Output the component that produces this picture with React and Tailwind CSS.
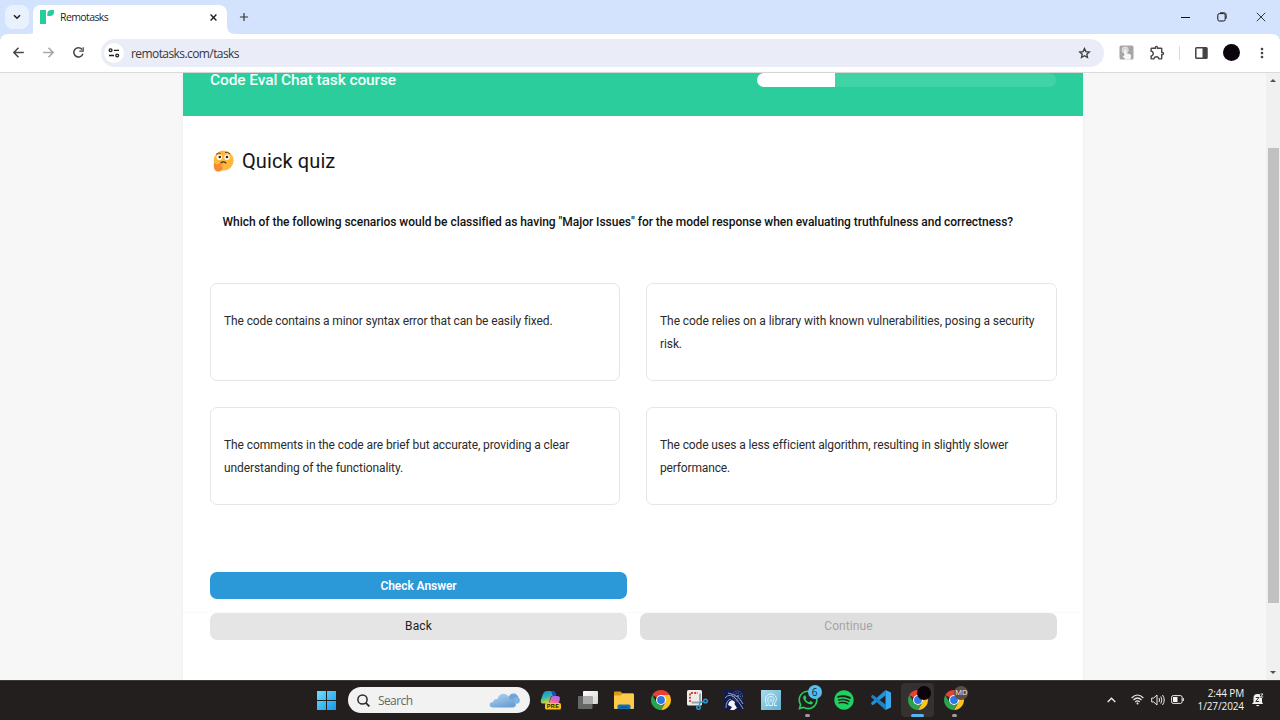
import React from "react";
import { MdOutlineExtension, MdMoreVert, MdAdd } from "react-icons/md";
import { FaSpotify, FaWhatsapp } from "react-icons/fa";

function TabStrip() {
  return (
    <div className="flex h-[34px] w-full shrink-0 bg-[#d3e3fd]">
      <div className="ml-[5px] mt-[5px] flex size-6 items-center justify-center rounded-lg bg-[#e9f1fe]">
        <svg width="8" height="6" viewBox="0 0 8 6" fill="none" stroke="#1f1f1f" strokeWidth="1.6">
          <path d="M1 1.2 4 4.2 7 1.2" />
        </svg>
      </div>
      <svg className="mt-[26px] shrink-0" width="8" height="8" viewBox="0 0 8 8">
        <path d="M-4 8H8V0C8 5 5 8 0 8Z" fill="#fff" />
      </svg>
      <div className="-ml-[4px] mt-[5px] flex h-[29px] w-[194px] items-center rounded-t-lg bg-white pb-[5px]">
        <svg className="ml-[7px]" width="14" height="14" viewBox="0 0 14 14" fill="#2bcc9b">
          <path d="M0 0H6V14H0Z" />
          <path d="M7.3 6V4A4 4 0 0 1 11.3 0H14V2A4 4 0 0 1 10 6Z" />
        </svg>
        <span className="ml-[6px] text-[10.5px] leading-none tracking-[-0.6px] text-[#1f1f1f]">Remotasks</span>
        <svg className="ml-auto mr-[10px]" width="7" height="7" viewBox="0 0 7 7">
          <path d="M.6.6 6.4 6.4M6.4.6.6 6.4" stroke="#1f1f1f" strokeWidth="1.400" />
        </svg>
      </div>
      <svg className="mt-[26px] shrink-0" width="8" height="8" viewBox="0 0 8 8">
        <path d="M0 0C0 5 3 8 8 8H0Z" fill="#fff" />
      </svg>
      <MdAdd className="ml-[2px] mt-[10px] size-[14px] text-[#333]" />
      <div className="ml-auto flex items-center">
        <svg className="mr-[27px]" width="9" height="9" viewBox="0 0 9 9">
          <path d="M0 4.5H9" stroke="#111" />
        </svg>
        <svg className="mr-[29px]" width="10" height="10" viewBox="0 0 10 10" fill="none" stroke="#111">
          <rect x=".8" y="1.6" width="7.4" height="7.4" rx="1.6" />
          <path d="M3 .7H6.8A2.4 2.4 0 0 1 9.3 3.2V6.600" strokeWidth=".8" />
        </svg>
        <svg className="mr-[14px]" width="10" height="10" viewBox="0 0 10 10">
          <path d="M.8.8 9.2 9.2M9.2.8.8 9.2" stroke="#222" strokeWidth=".9" />
        </svg>
      </div>
    </div>
  );
}

function Toolbar() {
  return (
    <div className="h-[39px] w-full shrink-0 bg-[#d3e3fd]">
      <div className="flex h-[39px] items-center rounded-t-lg border-b border-[#d9dadc] bg-white pb-px">
        <svg className="ml-[13px] shrink-0" width="11" height="11" viewBox="0 0 11 11" fill="none" stroke="#474747" strokeWidth="1.5">
          <path d="M10.800 5.500H1.200M5.500.8.900 5.500 5.500 10.200" />
        </svg>
        <svg className="ml-[19px] shrink-0" width="11" height="11" viewBox="0 0 11 11" fill="none" stroke="#a6a6a6" strokeWidth="1.5">
          <path d="M.2 5.500H9.800M5.500.8 10.100 5.500 5.500 10.200" />
        </svg>
        <svg className="ml-[19px] shrink-0" width="11" height="11" viewBox="0 0 11 11" fill="none" stroke="#444" strokeWidth="1.500">
          <path d="M9.900 6.600A4.600 4.600 0 1 1 9 2.500" />
          <path d="M10.800.2V4.700H6.300V3.400H9.500V.2Z" fill="#444" stroke="none" />
        </svg>
        <div className="ml-[17px] mt-px flex h-7 w-[1003px] items-center rounded-full bg-[#eaedf7] pl-[3px]">
          <div className="flex size-5 items-center justify-center rounded-full bg-white">
            <svg width="12" height="10" viewBox="0 0 12 10" fill="none" stroke="#1f1f1f" strokeWidth="1.3">
              <circle cx="2.6" cy="2.3" r="1.4" />
              <path d="M5.8 2.3H11M1 7.5H6" />
              <circle cx="9.2" cy="7.5" r="1.4" />
            </svg>
          </div>
          <span className="ml-[7px] mt-px text-[12px] leading-none tracking-[-0.58px] text-[#36363c]">remotasks.com/tasks</span>
          <svg className="ml-auto mr-[13px]" width="13" height="12" viewBox="0 0 13 12">
            <path d="M6.500 1.500 7.900 4.600 11.300 5 8.800 7.200 9.500 10.500 6.500 8.800 3.500 10.500 4.200 7.200 1.700 5 5.100 4.600Z" fill="none" stroke="#3c3c3c" strokeWidth="1.300" />
          </svg>
        </div>
        <svg className="ml-[15px]" width="15" height="15" viewBox="0 0 15 15">
          <rect x=".5" y=".5" width="14" height="14" rx="1.5" fill="#a6a6a6" />
          <circle cx="6.2" cy="5" r="3.2" fill="#d3d3d3" stroke="#eee" strokeWidth=".5" />
          <path d="M5.3 5.3a1 1 0 0 1 2 0v3l3.8 1 1.1 1.3-.7 4H6.6L3.6 11.5l1.7-1.1Z" fill="#f4f7fa" />
        </svg>
        <MdOutlineExtension className="ml-[15px] size-[17px] text-[#474747]" />
        <div className="ml-[13px] h-[14px] w-px bg-[#cbdcf3]" />
        <svg className="ml-[15px]" width="13" height="12" viewBox="0 0 13 12">
          <rect x=".8" y=".8" width="11.2" height="10.4" rx=".8" fill="none" stroke="#444" strokeWidth="1.5" />
          <path d="M7.5 1H12v10H7.5Z" fill="#444" />
        </svg>
        <div className="ml-[15px] size-[17px] rounded-full bg-[#0c040b]" />
        <MdMoreVert className="ml-[14px] size-4 text-[#444]" />
      </div>
    </div>
  );
}

function ThinkingFace() {
  return (
    <svg width="21" height="22" viewBox="0 0 21 22">
      <circle cx="10.6" cy="10.6" r="10" fill="#fdb83d" />
      <circle cx="6.3" cy="7.3" r="2.7" fill="#fff" />
      <circle cx="14" cy="7.3" r="2.7" fill="#fff" />
      <circle cx="6.8" cy="7" r="1.3" fill="#2b2320" />
      <circle cx="14" cy="7" r="1.3" fill="#2b2320" />
      <path d="M3.2 4.4Q5.2 2.4 7.6 3.3M12.2 2.5Q15 1.6 17 3.9" fill="none" stroke="#6b4520" strokeWidth="1" />
      <path d="M7.5 12.8Q10.5 10.8 13.2 13.2" fill="none" stroke="#4b2b1b" strokeWidth="1.2" />
      <path d="M1 13.2c1-.8 1.7.6 2.2 1.5l5.4-1.6c1.5-.3 1.7 1.3.5 1.7l-2.2.9c2.2.1 3 1.2 2.6 3C9 21 6.8 21.8 4.5 21.4 1.6 20.9.4 18 1 13.2Z" fill="#f98a2f" />
    </svg>
  );
}

function Option({ children }) {
  return (
    <div className="h-[98px] rounded-[7px] border border-[#e6e6e6] px-[13px] pt-[26px] text-[12px] leading-[23px] text-[#2b2b2b]">
      {children}
    </div>
  );
}

function Line({ className, children }) {
  return <div className={"whitespace-nowrap " + className}>{children}</div>;
}

function Quiz() {
  return (
    <main className="ml-[183px] flex w-[900px] shrink-0 flex-col bg-white font-[Roboto,sans-serif] shadow-[0_0_4px_rgba(0,0,0,0.05)]">
      <header className="flex h-[43px] items-start justify-between bg-[#2acd9b] px-[27px]">
        <h1 className="-mt-[2px] text-[15.5px] font-medium leading-[19px] tracking-[-0.11px] text-[#f2fffb]">Code Eval Chat task course</h1>
        <div className="h-[14px] w-[299px] overflow-hidden rounded-full bg-[#3fd3a6]">
          <div className="h-full w-[26%] bg-white" />
        </div>
      </header>
      <div className="px-[27px]">
        <div className="mt-[33px] flex h-6 items-center gap-2 pl-[3px]">
          <ThinkingFace />
          <h2 className="text-[20px] font-normal leading-6 tracking-[0.1px] text-[#151515]">Quick quiz</h2>
        </div>
        <p className="ml-[12.5px] mt-[39px] whitespace-nowrap text-[12px] font-medium leading-5 tracking-[-0.034px] text-[#111]">
          Which of the following scenarios would be classified as having "Major Issues" for the model response when evaluating truthfulness and correctness?
        </p>
        <div className="mt-[51px] grid grid-cols-[410px_411px] gap-x-[26px] gap-y-[26px]">
          <Option>
            <Line className="tracking-[-0.12px]">The code contains a minor syntax error that can be easily fixed.</Line>
          </Option>
          <Option>
            <Line className="tracking-[-0.06px]">The code relies on a library with known vulnerabilities, posing a security</Line>
            <Line className="tracking-[-0.1px]">risk.</Line>
          </Option>
          <Option>
            <Line className="tracking-[-0.1px]">The comments in the code are brief but accurate, providing a clear</Line>
            <Line className="tracking-[-0.09px]">understanding of the functionality.</Line>
          </Option>
          <Option>
            <Line className="tracking-[-0.11px]">The code uses a less efficient algorithm, resulting in slightly slower</Line>
            <Line className="tracking-[-0.15px]">performance.</Line>
          </Option>
        </div>
        <button className="mt-[67px] flex h-[27px] w-[417px] items-center justify-center rounded-[7px] bg-[#2b98d8] text-[12px] font-semibold tracking-[-0.06px] text-white">
          Check Answer
        </button>
      </div>
      <div className="mt-[13px] flex gap-[13px] border-t border-[#fafafa] pl-[27px] text-[12px]">
        <button className="h-[27px] w-[417px] shrink-0 rounded-[7px] bg-[#e5e5e5] pb-px tracking-[0.1px] text-[#222]">Back</button>
        <button className="h-[27px] w-[417px] shrink-0 rounded-[7px] bg-[#dfdfdf] pb-px tracking-[0.1px] text-[#a5a5a5]">Continue</button>
      </div>
    </main>
  );
}

function Scrollbar() {
  return (
    <div className="ml-auto flex w-[14px] flex-col items-center bg-[#f0f0f0]">
      <svg className="mt-[6px]" width="6" height="3" viewBox="0 0 6 3"><path d="M3 0 6 3H0Z" fill="#505050" /></svg>
      <div className="mt-[66px] h-[455px] w-[11px] bg-[#c1c1c1]" />
      <svg className="mb-[6px] mt-auto" width="6" height="3" viewBox="0 0 6 3"><path d="M0 0H6L3 3Z" fill="#505050" /></svg>
    </div>
  );
}

function Slot({ active, marker, children }) {
  return (
    <div className="flex h-full w-[36.7px] flex-col items-center">
      <div className={"mt-[2px] flex h-[34px] w-[33px] flex-col items-center rounded " + (active ? "bg-[#363131]" : "")}>
        <div className="flex h-[31px] shrink-0 items-center pt-[3px]">{children}</div>
        {marker && <div className={active ? "h-[2.5px] w-[13px] shrink-0 rounded-full bg-[#55b7ed]" : "h-[2.5px] w-[5px] shrink-0 rounded-full bg-[#a09c9c]"} />}
      </div>
    </div>
  );
}

function ChromeLogo() {
  return (
    <svg width="20" height="20" viewBox="0 0 20 20">
      <path d="M10 10 1.34 5A10 10 0 0 1 18.66 5Z" fill="#e94235" />
      <path d="M10 5H18.66A10 10 0 0 1 10 20L14.33 12.5Z" fill="#fcc31e" />
      <path d="M1.34 5A10 10 0 0 0 10 20L14.33 12.5A5 5 0 0 1 5.67 12.5Z" fill="#2ba24c" />
      <circle cx="10" cy="10" r="5" fill="#fff" />
      <circle cx="10" cy="10" r="3.9" fill="#2f78e8" />
    </svg>
  );
}

function Copilot() {
  return (
    <svg width="21" height="20" viewBox="0 0 21 20">
      <defs>
        <linearGradient id="cpA" x1="0" y1="0" x2=".3" y2="1">
          <stop offset="0" stopColor="#1b86e8" /><stop offset=".55" stopColor="#35b9a6" /><stop offset="1" stopColor="#d5d63a" />
        </linearGradient>
        <linearGradient id="cpB" x1=".8" y1="0" x2=".2" y2="1">
          <stop offset="0" stopColor="#a66cf0" /><stop offset=".6" stopColor="#e864ae" /><stop offset="1" stopColor="#fa9a62" />
        </linearGradient>
      </defs>
      <path d="M7 1H13Q15 1 15.7 4L16 5.5H13Q11 5.5 10.3 8L8.5 13.5H3Q0 13.5 1 9.5L3 4Q4 1 7 1Z" fill="url(#cpA)" />
      <path d="M13 6H17.5Q20.5 6 19.8 9.5L18.5 14H8.5L10.8 8Q11.5 6 13 6Z" fill="url(#cpB)" />
      <path d="M11 1H13Q15 1 15.7 4L16 6H13Z" fill="#174fc0" />
      <rect x="5" y="13" width="16" height="6.5" rx="1.5" fill="#fcc419" />
      <text x="13" y="18.4" textAnchor="middle" fontFamily="Liberation Sans" fontSize="5.6" fontWeight="700" letterSpacing=".4" fill="#241c05">PRE</text>
    </svg>
  );
}

function Taskbar() {
  return (
    <footer className="flex h-10 w-full shrink-0 items-stretch border-t border-[#3e3a3a] bg-[#231f1f]">
      <div className="ml-[308px] flex w-10 items-center pb-px pl-[9px]">
        <svg width="19" height="19" viewBox="0 0 19 19">
          <defs>
            <linearGradient id="win" x1="0" y1="0" x2="1" y2="1">
              <stop offset="0" stopColor="#6fe0fc" /><stop offset="1" stopColor="#1298ec" />
            </linearGradient>
          </defs>
          <path d="M0 0H9V9H0ZM10 0H19V9H10ZM0 10H9V19H0ZM10 10H19V19H10Z" fill="url(#win)" />
        </svg>
      </div>
      <div className="mt-[6px] flex h-[26px] w-[182px] items-center rounded-full bg-[#f3f2f2] pl-[9px] pr-[10px]">
        <svg width="13" height="13" viewBox="0 0 13 13" fill="none" stroke="#2a2a2a" strokeWidth="1.5">
          <circle cx="5.5" cy="5.5" r="4.6" />
          <path d="M8.8 8.8 12.4 12.4" strokeWidth="1.8" />
        </svg>
        <span className="ml-[8px] mt-px text-[12px] leading-none tracking-[-0.6px] text-[#666]">Search</span>
        <svg className="ml-auto" width="31" height="15" viewBox="0 0 31 15">
          <defs>
            <linearGradient id="cloud" x1="0" y1="0" x2=".6" y2="1">
              <stop offset="0" stopColor="#b4d7f4" /><stop offset="1" stopColor="#6aa0d3" />
            </linearGradient>
          </defs>
          <circle cx="24.5" cy="5.5" r="5" fill="#6ea5dc" />
          <circle cx="27.5" cy="7.5" r="3.3" fill="#7eb3e4" />
          <path d="M4 14.5C-.5 14.5-.5 9 4 9 4.5 6.5 6.5 5.5 8.5 6 9.5 2 13-.2 17 1.4c2.5 1 3.5 3 3.3 4.9 2.8-.6 4.5 1 4.5 2.9 3.2 1 2.5 5.3-.8 5.3Z" fill="url(#cloud)" />
        </svg>
      </div>
      <div className="ml-[2.5px] flex">
        <Slot><Copilot /></Slot>
        <Slot>
          <svg width="20" height="18" viewBox="0 0 20 18">
            <defs><linearGradient id="tv" x1="0" y1="0" x2="1" y2="1"><stop offset="0" stopColor="#fff" /><stop offset="1" stopColor="#d5d5d5" /></linearGradient></defs>
            <rect x="5" y="0" width="15" height="13" rx="1" fill="url(#tv)" />
            <rect x="0" y="5" width="14.5" height="13" rx="1" fill="#6f6e6e" fillOpacity=".9" />
            <path d="M5 5H14.5V13H5Z" fill="#aaa" />
          </svg>
        </Slot>
        <Slot>
          <svg width="20" height="19" viewBox="0 0 20 19">
            <path d="M0 1.5Q0 .5 1 .5H6.5L8.5 2.5H19V6H0Z" fill="#dc9b12" />
            <path d="M0 4.5H6.5L8.5 2.5H19Q20 2.5 20 3.5V17Q20 18 19 18H1Q0 18 0 17Z" fill="#fccb4a" />
            <path d="M3.5 18V15Q3.5 13.5 5 13.5H15Q16.5 13.5 16.5 15V18Z" fill="#1272b9" />
            <path d="M6 16H14" stroke="#084a83" />
          </svg>
        </Slot>
        <Slot><ChromeLogo /></Slot>
        <Slot>
          <svg width="21" height="20" viewBox="0 0 21 20">
            <rect x="0" y="0" width="15" height="15.5" rx="1.5" fill="#ececec" />
            <path d="M3 12V3H11" fill="none" stroke="#da3a24" strokeWidth="1.8" strokeDasharray="2 1.3" />
            <path d="M13 3.5V12.5H4.5" fill="none" stroke="#99a0a5" strokeWidth="1.8" />
            <path d="M13 12.5 17 11.5M13 12.5 12 16" fill="none" stroke="#2b9bd2" strokeWidth="1.3" />
            <circle cx="18.5" cy="11" r="1.8" fill="none" stroke="#2b9bd2" strokeWidth="1.5" />
            <circle cx="11.5" cy="17.5" r="1.8" fill="none" stroke="#2b9bd2" strokeWidth="1.5" />
          </svg>
        </Slot>
        <Slot>
          <svg width="20" height="20" viewBox="0 0 20 20">
            <rect width="20" height="20" fill="#101c4e" />
            <g fill="none" stroke="#b9c5e6">
              <circle cx="13.5" cy="6" r="3" strokeWidth=".6" strokeDasharray="1 1" />
              <circle cx="13.5" cy="6" r="5" strokeWidth=".5" strokeDasharray="1 1" />
              <path d="M1 8Q6 2 12 9T19 19M4 3Q15 5 19 14" strokeWidth=".8" />
              <path d="M2 18Q2 10 7 9" strokeWidth=".8" />
            </g>
            <path d="M5 12 8 10 11 12 10.5 14 13 18 10 20H6L8 17 4 15Z" fill="#f3f5fb" />
            <circle cx="14" cy="6" r="1" fill="#8799c9" />
          </svg>
        </Slot>
        <Slot>
          <svg width="20" height="20" viewBox="0 0 20 20">
            <defs><linearGradient id="aq" x1="0" y1="0" x2="1" y2="1"><stop offset="0" stopColor="#a9dced" /><stop offset="1" stopColor="#62aed0" /></linearGradient></defs>
            <rect width="20" height="20" fill="url(#aq)" />
            <g fill="none" stroke="#edfaff" strokeWidth=".9">
              <path d="M4.5 15.5H6.5C2.500 10 4.500 4 10 4S17 10 13.500 13V15.500H16" />
              <path d="M8 15.500V13.500C5.800 11 6.500 6.500 10 6.500S13.500 10.500 11.700 12.500V15.500Z" />
              <path d="M9.200 12V9.500Q10 8.300 10.800 9.500V12" strokeWidth=".7" />
            </g>
          </svg>
        </Slot>
        <Slot marker>
          <div className="relative">
            <FaWhatsapp className="size-[22px] text-[#26cf5f]" />
            <span className="absolute -right-[3px] -top-[4px] flex size-[14px] items-center justify-center rounded-full bg-[#58bdec] text-[10px] leading-none text-[#10283a]">6</span>
          </div>
        </Slot>
        <Slot><FaSpotify className="size-5 text-[#1fd15f]" /></Slot>
        <Slot>
          <svg width="20" height="20" viewBox="0 0 20 20">
            <path d="M14.500 5.500 1.800 15.200.2 14V12.800L14.500 0Z" fill="#2491d8" />
            <path d="M.2 6 1.800 4.800 14.500 14.500V20L.2 7.200Z" fill="#1d83c8" />
            <path d="M14.500 0 20 2.500V17.500L14.500 20Z" fill="#38a9ee" />
          </svg>
        </Slot>
        <Slot active marker>
          <div className="relative">
            <ChromeLogo />
            <span className="absolute -right-[3px] -top-[4px] size-[14px] rounded-full bg-[#0b040a]" />
          </div>
        </Slot>
        <Slot marker>
          <div className="relative">
            <ChromeLogo />
            <span className="absolute -right-[4px] -top-[4px] flex size-[14px] items-center justify-center rounded-full bg-[#654c42] text-[7.5px] leading-none text-[#eee]">MD</span>
          </div>
        </Slot>
      </div>
      <div className="ml-auto flex items-center pb-[2px]">
        <svg className="mr-[15px]" width="9" height="6" viewBox="0 0 9 6"><path d="M.7 5 4.5 1.2 8.3 5" fill="none" stroke="#eee" strokeWidth="1.3" /></svg>
        <svg className="mr-[7px]" width="13" height="11" viewBox="0 0 13 11" fill="none" stroke="#e9e9e9" strokeWidth="1.2">
          <path d="M.6 4Q6.5-2 12.4 4M2.5 6Q6.5 2 10.5 6M4.3 8Q6.5 5.8 8.7 8" />
          <circle cx="6.5" cy="9.5" r="1" fill="#eee" stroke="none" />
        </svg>
        <svg className="mr-[6px]" width="14" height="12" viewBox="0 0 14 12" fill="none" stroke="#e9e9e9">
          <path d="M.7 4V8H2.7L6 11V1L2.7 4Z" />
          <path d="M8 4Q9.2 6 8 8M9.8 2.5Q12 6 9.8 9.5M11.5 1Q15 6 11.5 11" />
        </svg>
        <svg className="mr-[14px]" width="13" height="9" viewBox="0 0 13 9">
          <rect x=".6" y=".6" width="10.5" height="7.8" rx="1.6" fill="none" stroke="#e9e9e9" />
          <rect x="2" y="2" width="4.5" height="5" fill="#f5f5f5" />
          <path d="M12.2 3V6" stroke="#e9e9e9" strokeWidth="1.3" />
        </svg>
        <div className="mr-[8px] text-right text-[10px] leading-[13px] text-[#f4f4f4]">
          <div className="whitespace-nowrap tracking-[-0.15px]">2:44 PM</div>
          <div className="whitespace-nowrap tracking-[-0.1px]">1/27/2024</div>
        </div>
        <svg className="mr-[16px]" width="12" height="14" viewBox="0 0 12 14">
          <path d="M1.5 5Q1.5 1 5.5 1H10V9L11 11H0L1.5 9ZM4 12H7.5Q5.7 14.5 4 12Z" fill="#f0f0f0" />
          <path d="M3.8 4.5H7L3.8 8.5H7.2" fill="none" stroke="#373333" strokeWidth="1" />
          <path d="M7.5 0H12V5H8.5Z" fill="#231f1f" />
          <path d="M8.5 1H11L8.5 4H11.2" fill="none" stroke="#f0f0f0" strokeWidth=".9" />
        </svg>
      </div>
    </footer>
  );
}

export default function App() {
  return (
    <div className="flex h-[720px] w-[1280px] flex-col overflow-hidden bg-[#f7f7f7] font-['Open_Sans','Noto_Sans',sans-serif]">
      <TabStrip />
      <Toolbar />
      <div className="flex h-[607px] w-full shrink-0">
        <Quiz />
        <Scrollbar />
      </div>
      <Taskbar />
    </div>
  );
}
